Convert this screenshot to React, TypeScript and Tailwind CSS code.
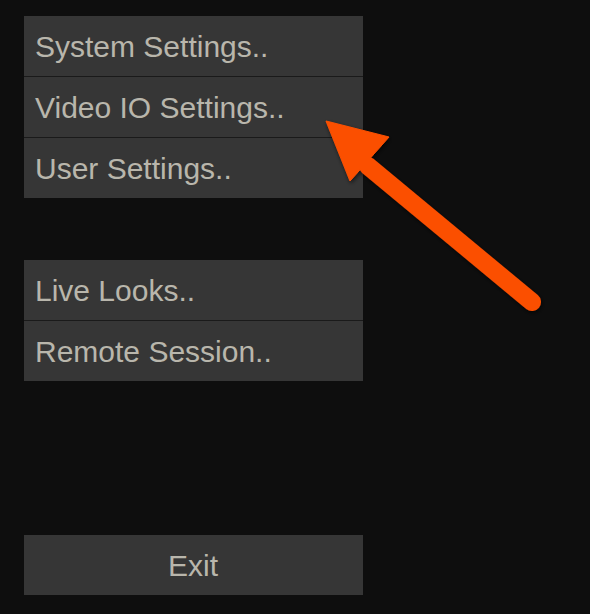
import React from "react";

const font = { fontFamily: '"Liberation Sans", Arial, sans-serif' };

function Item({ label, last }: { label: string; last?: boolean }) {
  return (
    <div
      className={`flex items-center pl-[11px] bg-[#363636] text-[#b9b6ac] text-[30px] ${last ? "h-[60px]" : "border-b border-[#1a1a1a] h-[61px]"}`}
    >
      {label}
    </div>
  );
}

export default function App() {
  return (
    <div className="relative w-[590px] h-[614px] bg-[#0e0e0e] overflow-hidden" style={font}>
      <div className="flex flex-col pt-[16px] pl-[24px] w-[363px]">
        <div className="flex flex-col">
          <Item label="System Settings.." />
          <Item label="Video IO Settings.." />
          <Item label="User Settings.." last />
        </div>
        <div className="flex flex-col mt-[62px]">
          <Item label="Live Looks.." />
          <Item label="Remote Session.." last />
        </div>
        <div className="mt-[154px] h-[60px] flex items-center justify-center pr-[1px] bg-[#363636] text-[#b9b6ac] text-[30px]">
          Exit
        </div>
      </div>
      <svg className="absolute left-0 top-0" width="590" height="614" viewBox="0 0 590 614">
        <defs>
          <filter id="sh" x="-20%" y="-20%" width="140%" height="140%">
            <feDropShadow dx="1" dy="2" stdDeviation="2" floodColor="#000" floodOpacity="0.6" />
          </filter>
        </defs>
        <g filter="url(#sh)" fill="#fb5000" stroke="#fb5000">
          <line x1="368" y1="166" x2="532" y2="302" strokeWidth="18" strokeLinecap="round" />
          <polygon points="326,121 389,137 350,181" strokeWidth="1" strokeLinejoin="miter" />
        </g>
      </svg>
    </div>
  );
}
